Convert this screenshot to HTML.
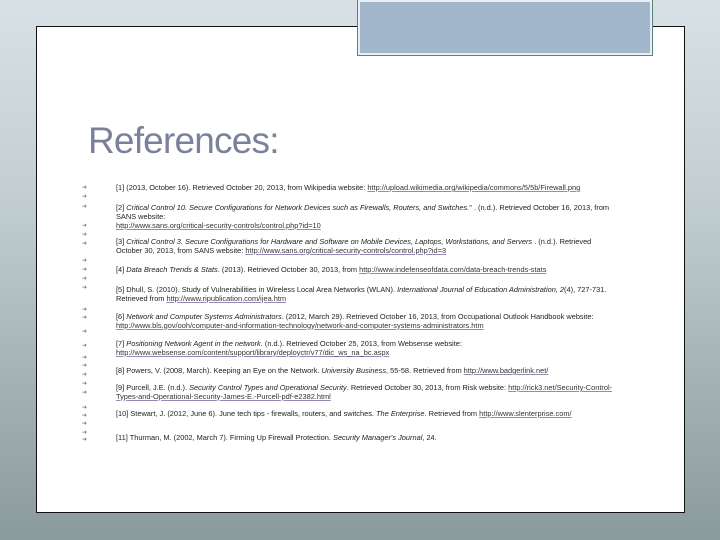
<!DOCTYPE html>
<html><head><meta charset="utf-8"><style>
body{margin:0;width:720px;height:540px;overflow:hidden;position:relative;font-family:"Liberation Sans",sans-serif;
background:linear-gradient(180deg,#d8e2e6 0%,#c3cfd3 35%,#a4b2b6 70%,#8b9a9d 100%);}
.panel{position:absolute;left:36px;top:26px;width:647px;height:485px;background:#fff;border:1px solid #111;}
.blue{position:absolute;left:358px;top:0;width:290px;height:51px;background:#a2b6cc;border:2px solid #e9eef2;outline:1px solid #5c7f80;}
h1{position:absolute;left:88px;top:120px;margin:0;font-weight:normal;font-size:37px;color:#7c819b;letter-spacing:-0.8px;}
.b{position:absolute;left:82px;font-size:6px;color:#777;}
.t{position:absolute;left:116px;font-size:7.4px;color:#222;white-space:nowrap;line-height:8.5px;}
a{color:#333;text-decoration:underline;text-decoration-color:#9b86b8;}
i{font-style:italic}
</style></head><body>
<div class="panel"></div>
<div class="blue"></div>
<h1>References:</h1>
<div class="b" style="top:184px">➜</div><div class="b" style="top:193px">➜</div><div class="b" style="top:203px">➜</div>
<div class="b" style="top:222px">➜</div><div class="b" style="top:231px">➜</div><div class="b" style="top:240px">➜</div>
<div class="b" style="top:257px">➜</div><div class="b" style="top:266px">➜</div><div class="b" style="top:275px">➜</div>
<div class="b" style="top:284px">➜</div><div class="b" style="top:306px">➜</div><div class="b" style="top:314px">➜</div>
<div class="b" style="top:328px">➜</div><div class="b" style="top:342px">➜</div><div class="b" style="top:354px">➜</div>
<div class="b" style="top:362px">➜</div><div class="b" style="top:371px">➜</div><div class="b" style="top:380px">➜</div>
<div class="b" style="top:389px">➜</div><div class="b" style="top:404px">➜</div><div class="b" style="top:412px">➜</div>
<div class="b" style="top:420px">➜</div><div class="b" style="top:429px">➜</div><div class="b" style="top:436px">➜</div>
<div class="t" style="top:184px">[1] (2013, October 16). Retrieved October 20, 2013, from Wikipedia website: <a>http://upload.wikimedia.org/wikipedia/commons/5/5b/Firewall.png</a></div>
<div class="t" style="top:204px">[2] <i>Critical Control 10. Secure Configurations for Network Devices such as Firewalls, Routers, and Switches.</i>" . (n.d.). Retrieved October 16, 2013, from<br>SANS website:</div>
<div class="t" style="top:222px"><a>http://www.sans.org/critical-security-controls/control.php?id=10</a></div>
<div class="t" style="top:238px">[3] <i>Critical Control 3. Secure Configurations for Hardware and Software on Mobile Devices, Laptops, Workstations, and Servers</i> . (n.d.). Retrieved<br>October 30, 2013, from SANS website: <a>http://www.sans.org/critical-security-controls/control.php?id=3</a></div>
<div class="t" style="top:266px">[4] <i>Data Breach Trends &amp; Stats</i>. (2013). Retrieved October 30, 2013, from <a>http://www.indefenseofdata.com/data-breach-trends-stats</a></div>
<div class="t" style="top:286px">[5] Dhull, S. (2010). Study of Vulnerabilities in Wireless Local Area Networks (WLAN). <i>International Journal of Education Administration, 2</i>(4), 727-731.<br>Retrieved from <a>http://www.ripublication.com/ijea.htm</a></div>
<div class="t" style="top:313px">[6] <i>Network and Computer Systems Administrators</i>. (2012, March 29). Retrieved October 16, 2013, from Occupational Outlook Handbook website:<br><a>http://www.bls.gov/ooh/computer-and-information-technology/network-and-computer-systems-administrators.htm</a></div>
<div class="t" style="top:340px">[7] <i>Positioning Network Agent in the network</i>. (n.d.). Retrieved October 25, 2013, from Websense website:<br><a>http://www.websense.com/content/support/library/deployctr/v77/dic_ws_na_bc.aspx</a></div>
<div class="t" style="top:367px">[8] Powers, V. (2008, March). Keeping an Eye on the Network. <i>University Business</i>, 55-58. Retrieved from <a>http://www.badgerlink.net/</a></div>
<div class="t" style="top:384px">[9] Purcell, J.E. (n.d.). <i>Security Control Types and Operational Security</i>. Retrieved October 30, 2013, from Risk website: <a>http://rick3.net/Security-Control-</a><br><a>Types-and-Operational-Security-James-E.-Purcell-pdf-e2382.html</a></div>
<div class="t" style="top:410px">[10] Stewart, J. (2012, June 6). June tech tips - firewalls, routers, and switches. <i>The Enterprise</i>. Retrieved from <a>http://www.slenterprise.com/</a></div>
<div class="t" style="top:434px">[11] Thurman, M. (2002, March 7). Firming Up Firewall Protection. <i>Security Manager's Journal</i>, 24.</div>
</body></html>
